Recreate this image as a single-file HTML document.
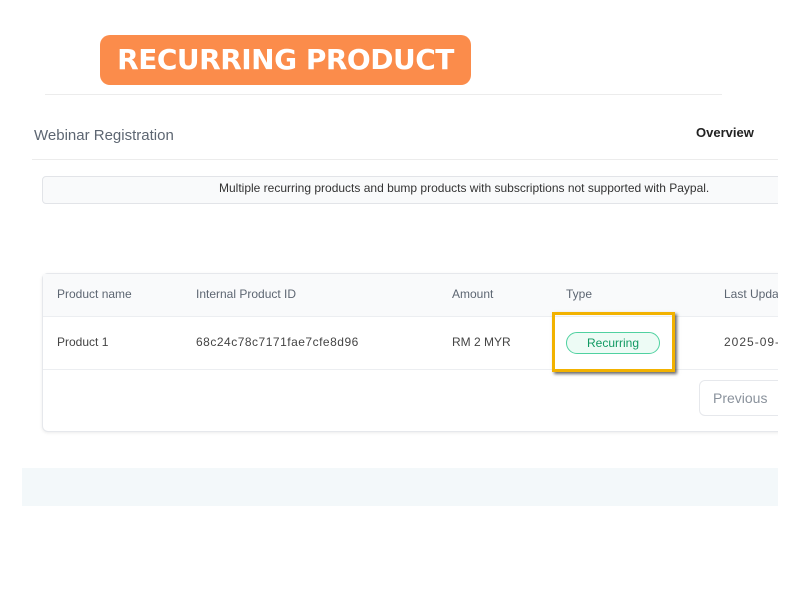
<!DOCTYPE html>
<html><head><style>
body{margin:0;width:800px;height:600px;background:#fff;position:relative;overflow:hidden;font-family:"Liberation Sans",sans-serif;}
.a{position:absolute;white-space:nowrap;}
#clip{position:absolute;left:0;top:0;width:778px;height:600px;overflow:hidden;}
</style></head><body>
<div class="a" style="left:100px;top:35px;width:371px;height:50px;background:#fb8c4b;border-radius:10px;"></div>
<div class="a" style="left:100px;top:42px;width:371px;text-align:center;color:#fff;font:900 28px/36px 'DejaVu Sans',sans-serif;letter-spacing:-0.5px;">RECURRING PRODUCT</div>
<div class="a" style="left:45px;top:94px;width:677px;height:1px;background:#ececec;"></div>
<div class="a" style="left:34px;top:127px;font-size:15px;color:#5d6672;">Webinar Registration</div>
<div id="clip">
<div class="a" style="left:696px;top:125px;font-size:13px;font-weight:bold;color:#222;">Overview</div>
<div class="a" style="left:32px;top:159px;width:746px;height:1px;background:#ececec;"></div>
<div class="a" style="left:42px;top:176px;width:740px;height:26px;border:1px solid #e2e4e8;border-radius:4px;background:#f9fafb;"></div>
<div class="a" style="left:219px;top:181px;font-size:12px;color:#333;">Multiple recurring products and bump products with subscriptions not supported with Paypal.</div>
<div class="a" style="left:42px;top:273px;width:760px;height:157px;border:1px solid #e6e8ec;border-radius:6px;box-shadow:0 1px 3px rgba(0,0,0,0.08);background:#fff;"></div>
<div class="a" style="left:43px;top:274px;width:756px;height:42px;background:#f9fafb;border-bottom:1px solid #eceef1;"></div>
<div class="a" style="left:43px;top:369px;width:756px;height:1px;background:#eceef1;"></div>
<div class="a" style="top:287px;left:57px;font-size:12px;color:#5d6672;">Product name</div>
<div class="a" style="top:287px;left:196px;font-size:12px;color:#5d6672;">Internal Product ID</div>
<div class="a" style="top:287px;left:452px;font-size:12px;color:#5d6672;">Amount</div>
<div class="a" style="top:287px;left:566px;font-size:12px;color:#5d6672;">Type</div>
<div class="a" style="top:287px;left:724px;font-size:12px;color:#5d6672;">Last Updated</div>
<div class="a" style="top:335px;left:57px;font-size:12px;color:#444;">Product 1</div>
<div class="a" style="top:335px;left:196px;font-size:12px;color:#444;letter-spacing:0.5px;">68c24c78c7171fae7cfe8d96</div>
<div class="a" style="top:335px;left:452px;font-size:12px;color:#444;">RM 2 MYR</div>
<div class="a" style="top:335px;left:724px;font-size:12px;color:#444;letter-spacing:1px;">2025-09-11</div>
<div class="a" style="left:699px;top:380px;width:90px;height:34px;border:1px solid #e6e8ec;border-radius:6px;"></div>
<div class="a" style="left:713px;top:390px;font-size:14px;color:#8a929c;">Previous</div>
<div class="a" style="left:22px;top:468px;width:756px;height:38px;background:#f3f8fa;"></div>
</div>
<div class="a" style="left:552px;top:312px;width:117px;height:54px;border:3px solid #f2b200;box-shadow:2px 2px 3px rgba(0,0,0,0.6);"></div>
<div class="a" style="left:566px;top:332px;width:92px;height:20px;border:1px solid #4fd1a0;border-radius:11px;background:#edfbf5;color:#119a63;font-size:12px;text-align:center;line-height:20px;">Recurring</div>
</body></html>
